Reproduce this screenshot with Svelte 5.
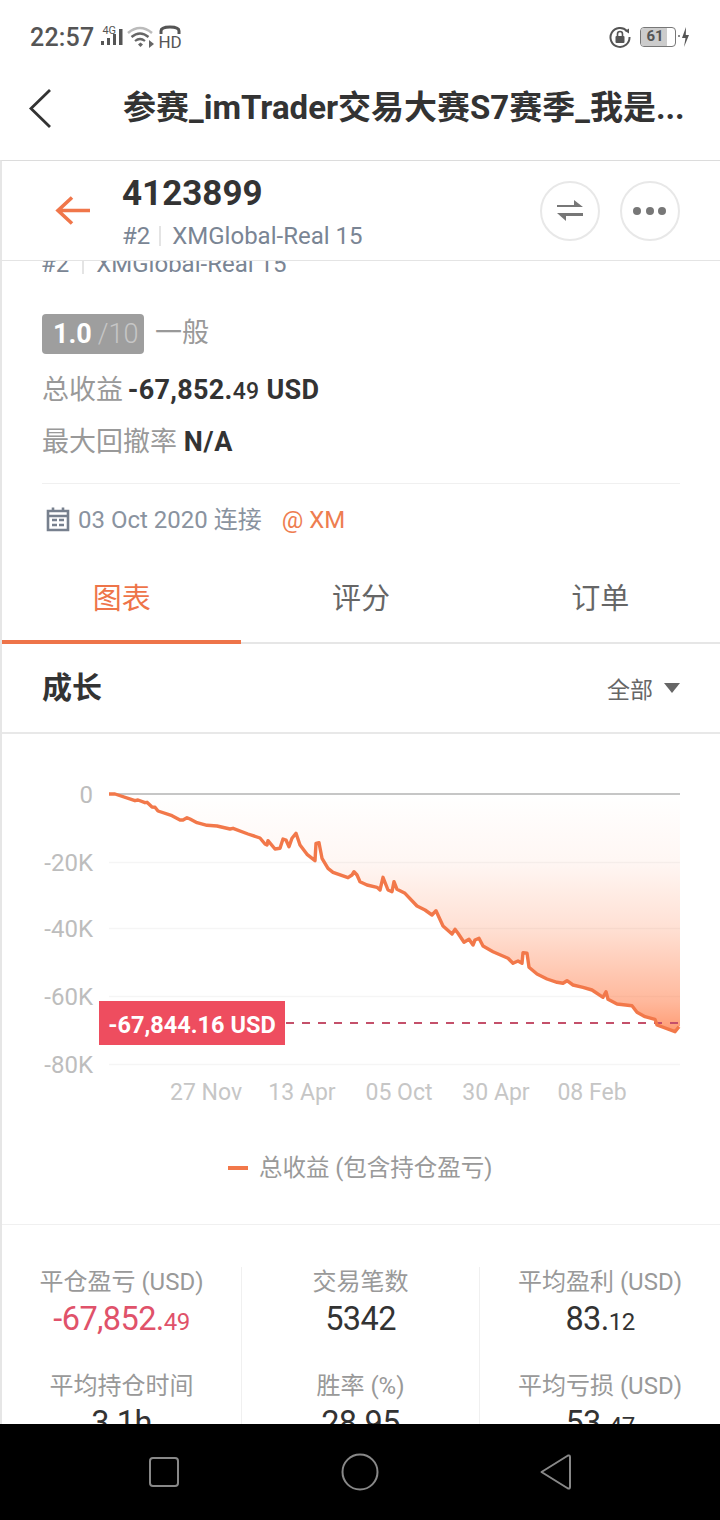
<script>
  // chart series, traced in page-ish pixels (svg origin is the top of the chart block)
  const top = 734;
  const raw = [
    [109,794],[115,794],[135,800.7],[138,800],[145,802.7],[147,802.3],[152,807],[155,807.3],[158,811],[172,815.7],[180,820],[183,820],[187,817.7],[190,819],[197,822.7],[207,825.3],[217,826],[230,829],[233,828.3],[248,834],[260,838],[265,844],[267,845],[268,840.7],[275,849],[280,848.3],[283,839],[286,840],[289,846.7],[292,838.3],[296,833.3],[300,845],[307,854.3],[315,860.7],[316,843.3],[319,842.7],[322,858.3],[328,868.3],[333,872.3],[348,877.7],[352,875],[354,871.7],[357,875],[360,881.7],[367,885],[377,887.3],[380,890],[383,877.3],[388,890],[392,891.7],[394,881.7],[397,889.3],[405,893.3],[417,906],[425,910],[432,915],[436,910.7],[443,926],[452,934],[455,929.3],[458,933.3],[464,942.3],[469,939.3],[473,945],[475,940],[479,938.3],[483,946],[493,951.7],[508,958.3],[513,963.3],[518,961],[522,963.3],[523,952.7],[527,953.3],[529,967.3],[537,974],[547,979],[557,982.3],[563,983.3],[567,980.7],[573,985],[583,987.3],[592,990],[603,997.3],[606,991.7],[608,999.3],[617,1004],[632,1005.7],[637,1012.3],[645,1016.7],[655,1019.3],[657,1025],[675,1031.7],[679,1026.7]
  ];
  const points = raw.map(([x, y]) => [x, +(y - top).toFixed(1)]);
  const linePath = points.map((p, i) => (i ? "L" : "M") + p[0] + " " + p[1]).join(" ");
  const areaPath = linePath + " L680 292 L680 60 L109 60 Z";

  const yTicks = [
    { label: "0", y: 60 },
    { label: "-20K", y: 128.5 },
    { label: "-40K", y: 194.5 },
    { label: "-60K", y: 262.5 },
    { label: "-80K", y: 330.5 }
  ];
  const xTicks = [
    { label: "27 Nov", x: 206 },
    { label: "13 Apr", x: 302 },
    { label: "05 Oct", x: 399 },
    { label: "30 Apr", x: 496 },
    { label: "08 Feb", x: 592 }
  ];
  const stats = [
    { label: "平仓盈亏 (USD)", big: "-67,852.", small: "49", red: true },
    { label: "交易笔数", big: "5342" },
    { label: "平均盈利 (USD)", big: "83.", small: "12" },
    { label: "平均持仓时间", big: "3.1h" },
    { label: "胜率 (%)", big: "28.95" },
    { label: "平均亏损 (USD)", big: "53.", small: "47" }
  ];
</script>

<div class="phone">
  <div class="status">
    <div class="status-left">
      <span class="time">22:57</span>
      <span class="net">4G</span>
      <svg class="signal" width="24" height="20" viewBox="0 0 24 20">
        <rect x="1" y="14" width="3" height="4" fill="#555" />
        <rect x="7" y="11" width="3" height="7" fill="#555" />
        <rect x="13" y="7" width="3" height="11" fill="#555" />
        <rect x="19" y="2" width="3.5" height="16" fill="#555" />
      </svg>
      <svg class="wifi" width="28" height="24" viewBox="0 0 28 24" fill="none">
        <path d="M1 8 Q13 -2 25 8" stroke="#bbb" stroke-width="2.6" />
        <path d="M4.5 12 Q13 5 21.5 12" stroke="#666" stroke-width="2.4" />
        <path d="M8 16 Q13 12 18 16" stroke="#666" stroke-width="2.2" />
        <path d="M11 19.5 L13.5 17.5 L16 19.5 L13.5 22 Z" fill="#666" />
        <path d="M22 15 L27 19 L22 23 Z" fill="#666" />
      </svg>
      <div class="hd">
        <svg width="22" height="10" viewBox="0 0 22 10" fill="none">
          <path d="M2 9 V6 Q2 2 11 2 Q20 2 20 6 V9" stroke="#555" stroke-width="3" />
        </svg>
        <span>HD</span>
      </div>
    </div>
    <div class="status-right">
      <svg width="22" height="22" viewBox="0 0 22 22" fill="none">
        <path d="M18 5 A9.5 9.5 0 1 0 20.5 11" stroke="#555" stroke-width="2" />
        <path d="M16 5 L20 2.5 L20 7.5 Z" fill="#555" />
        <rect x="6.5" y="10" width="9" height="7" rx="1" fill="#555" />
        <path d="M8.5 10 V8 A2.5 2.5 0 0 1 13.5 8 V10" stroke="#555" stroke-width="1.6" />
      </svg>
      <div class="battery"><span class="level">61</span></div>
      <svg class="bolt" width="12" height="22" viewBox="0 0 12 22">
        <circle cx="1" cy="10" r="1" fill="#666" />
        <path d="M8 1 L4 12 H7.5 L6 21 L11 9 H7.8 Z" fill="#555" />
      </svg>
    </div>
  </div>

  <div class="navbar">
    <svg class="chevron" width="28" height="44" viewBox="0 0 28 44" fill="none">
      <path d="M23 3 L4 21.500 L23 40" stroke="#333" stroke-width="2.800" />
    </svg>
    <div class="nav-title">参赛_imTrader交易大赛S7赛季_我是...</div>
  </div>

  <div class="account">
    <svg class="arrow" width="38" height="32" viewBox="0 0 38 32" fill="none">
      <path d="M36 15.500 H5 M18 2.500 L4 15.500 L18 28.500" stroke="#f0764a" stroke-width="3.600" />
    </svg>
    <div class="account-info">
      <div class="account-id">4123899</div>
      <div class="server">#2<i></i>XMGlobal-Real 15</div>
    </div>
    <div class="round-btn">
      <svg width="30" height="26" viewBox="0 0 30 26">
        <path d="M2 9 H28 L19 2 V7 H2 Z" fill="#777" />
        <path d="M28 15 H2 L11 23 V18 H28 Z" fill="#777" />
      </svg>
    </div>
    <div class="round-btn">
      <svg width="36" height="10" viewBox="0 0 36 10">
        <circle cx="5" cy="5" r="4" fill="#777" />
        <circle cx="18" cy="5" r="4" fill="#777" />
        <circle cx="30" cy="5" r="4" fill="#777" />
      </svg>
    </div>
  </div>

  <div class="scroll">
    <div class="peek"><div class="server peek-text">#2<i></i>XMGlobal-Real 15</div></div>

    <div class="summary">
      <div class="rating-row">
        <span class="badge"><b>1.0</b><em>/10</em></span>
        <span class="rating-text">一般</span>
      </div>
      <div class="metric">总收益 <b>-67,852.<small>49</small> USD</b></div>
      <div class="metric second">最大回撤率 <b>N/A</b></div>
      <div class="connect">
        <svg width="26" height="26" viewBox="0 0 26 26" fill="none">
          <path d="M3 5 H23 V24 H3 Z" stroke="#77808e" stroke-width="2.600" />
          <path d="M8 1.500 V6 M18 1.500 V6 M3 10 H23" stroke="#77808e" stroke-width="2.600" />
          <path d="M7 14 H12 M14 14 H19 M7 19 H12 M14 19 H19" stroke="#77808e" stroke-width="2.400" />
        </svg>
        <span class="date">03 Oct 2020 连接</span>
        <span class="broker">@ XM</span>
      </div>
    </div>

    <div class="tabs">
      <div class="tab active">图表</div>
      <div class="tab">评分</div>
      <div class="tab">订单</div>
    </div>

    <div class="section-head">
      <span class="section-title">成长</span>
      <span class="range">全部<i class="caret"></i></span>
    </div>

    <div class="chart">
      <svg width="718" height="490" viewBox="2 0 718 490">
        <defs>
          <linearGradient id="area" gradientUnits="userSpaceOnUse" x1="0" y1="60" x2="0" y2="298">
            <stop offset="0" stop-color="#ff7a45" stop-opacity="0" />
            <stop offset="0.28" stop-color="#ff7a45" stop-opacity="0.06" />
            <stop offset="0.56" stop-color="#ff7a45" stop-opacity="0.23" />
            <stop offset="0.87" stop-color="#ff7a45" stop-opacity="0.53" />
            <stop offset="1" stop-color="#ff7a45" stop-opacity="0.75" />
          </linearGradient>
        </defs>
        {#each yTicks as t, i}
          <line x1="109" x2="680" y1={t.y} y2={t.y} stroke={i ? "#f5f5f5" : "#c6c6c6"} stroke-width={i ? 1.5 : 2} />
          <text class="axis" x="93" y={t.y + 8.500} text-anchor="end">{t.label}</text>
        {/each}
        <path d={areaPath} fill="url(#area)" />
        <line x1="286" x2="680" y1="289" y2="289" stroke="#c4506a" stroke-width="2" stroke-dasharray="8 8" />
        <path d={linePath} fill="none" stroke="#f2784a" stroke-width="3.400" stroke-linejoin="round" />
        <rect x="99" y="267" width="186" height="44" fill="#ee4d5f" />
        <text class="tag" x="192" y="298.500" text-anchor="middle">-67,844.16 USD</text>
        {#each xTicks as t}
          <text class="axis x" x={t.x} y="366" text-anchor="middle">{t.label}</text>
        {/each}
      </svg>
      <div class="legend"><i></i>总收益 (包含持仓盈亏)</div>
    </div>

    <div class="stats">
      {#each stats as s}
        <div class="stat">
          <div class="stat-label">{s.label}</div>
          <div class="stat-value" class:red={s.red}>{s.big}{#if s.small}<small>{s.small}</small>{/if}</div>
        </div>
      {/each}
    </div>
  </div>

  <div class="sysnav">
    <svg width="30" height="32" viewBox="0 0 30 32" fill="none">
      <rect x="1" y="2" width="28" height="28" rx="3" stroke="#888" stroke-width="2" />
    </svg>
    <svg class="home" width="38" height="38" viewBox="0 0 38 38" fill="none">
      <circle cx="19" cy="19" r="17.500" stroke="#888" stroke-width="2" />
    </svg>
    <svg width="34" height="38" viewBox="0 0 34 38" fill="none">
      <path d="M2.500 19 L29 2.500 Q31 2 31 4 V34 Q31 36 29 35.500 Z" stroke="#888" stroke-width="2" stroke-linejoin="round" />
    </svg>
  </div>
</div>

<style>
  :global(body) {
    margin: 0;
    background: #fff;
  }

  .phone {
    width: 720px;
    height: 1520px;
    display: flex;
    flex-direction: column;
    overflow: hidden;
    font-family: Roboto, "Noto Sans CJK SC", sans-serif;
    color: #333;
  }

  .status {
    height: 68px;
    flex: none;
    display: flex;
    justify-content: space-between;
    align-items: center;
    padding: 6px 30px 0;
    box-sizing: border-box;
  }

  .status-left,
  .status-right {
    display: flex;
    align-items: center;
  }

  .time {
    font-size: 25px;
    font-weight: 500;
    color: #555;
    letter-spacing: 0.2px;
  }

  .net {
    font-size: 11px;
    color: #555;
    margin: -14px -13px 0 8px;
    width: 12px;
  }

  .signal {
    margin: 0 0 0 -1px;
  }

  .wifi {
    margin-left: 3px;
  }

  .hd {
    display: flex;
    flex-direction: column;
    align-items: center;
    margin-left: 3px;
    font-size: 17px;
    line-height: 14px;
    color: #555;
  }

  .status-right svg:first-child {
    margin-right: 9px;
  }

  .battery {
    width: 36px;
    height: 20px;
    box-sizing: border-box;
    border: 1.5px solid #777;
    border-radius: 4px;
    overflow: hidden;
  }

  .level {
    display: block;
    width: 24px;
    height: 100%;
    background: #ccc;
    text-align: center;
    font-size: 15px;
    line-height: 17px;
    font-weight: 700;
    color: #555;
    padding-left: 2px;
  }

  .bolt {
    margin: 0 0 0 2px;
  }

  .navbar {
    height: 92px;
    flex: none;
    display: flex;
    align-items: center;
    padding: 0 0 14px 27px;
    box-sizing: border-box;
  }

  .chevron {
    margin-top: 3px;
    margin-right: 69px;
  }

  .nav-title {
    font-size: 33px;
    font-weight: 700;
    white-space: nowrap;
    color: #333;
    margin-left: -1px;
    margin-top: -4px;
  }

  .account {
    height: 101px;
    flex: none;
    box-sizing: border-box;
    border-top: 1.5px solid #dcdcdc;
    border-bottom: 1.5px solid #e4e4e4;
    border-left: 2px solid #e6e6e6;
    display: flex;
    align-items: center;
    padding: 0 40px 0 52px;
    gap: 20px;
  }

  .arrow {
    margin-right: 10px;
    margin-top: 1px;
  }

  .account-info {
    flex: 1;
  }

  .account-id {
    font-size: 35px;
    font-weight: 700;
    line-height: 40px;
    margin-top: 3px;
  }

  .server {
    font-size: 24px;
    line-height: 30px;
    color: #7a8594;
    margin-top: 7px;
    display: flex;
    align-items: center;
  }

  .server i {
    width: 2px;
    height: 20px;
    background: #e4e4e4;
    margin: 0 11px 0 9px;
  }

  .round-btn {
    width: 60px;
    height: 60px;
    box-sizing: border-box;
    border: 2px solid #e8e8e8;
    border-radius: 50%;
    display: flex;
    align-items: center;
    justify-content: center;
  }

  .scroll {
    flex: 1;
    min-height: 0;
    overflow: hidden;
    border-left: 2px solid #e6e6e6;
  }

  .peek {
    height: 15px;
    overflow: hidden;
    padding-left: 39px;
  }

  .peek-text {
    margin-top: -12px;
  }

  .peek-text i {
    margin: 0 12px 0 13px;
  }

  .summary {
    padding: 39px 40px 0;
  }

  .rating-row {
    display: flex;
    align-items: center;
    gap: 11px;
  }

  .badge {
    width: 102px;
    height: 40px;
    margin-top: -1px;
    box-sizing: border-box;
    padding-left: 11px;
    background: #9e9e9e;
    border-radius: 4px;
    display: flex;
    align-items: center;
    font-size: 27px;
    color: #fff;
  }

  .badge b {
    font-weight: 700;
  }

  .badge em {
    font-style: normal;
    font-weight: 300;
    color: #c6c6c6;
    margin-left: 6px;
  }

  .rating-text {
    font-size: 27px;
    line-height: 34px;
    color: #999;
    margin-top: -3px;
  }

  .metric {
    font-size: 27px;
    line-height: 36px;
    color: #999;
    margin-top: 18px;
  }

  .metric.second {
    margin-top: 14px;
  }

  .metric b {
    font-size: 27px;
    color: #333;
    font-weight: 700;
    letter-spacing: 0.3px;
    margin-left: -2px;
  }

  .metric.second b {
    letter-spacing: 0.8px;
    margin-left: 0;
  }

  .metric small {
    font-size: 23px;
    font-weight: 500;
  }

  .connect {
    margin-top: 23px;
    border-top: 1.5px solid #f0f0f0;
    padding-top: 22px;
    height: 54px;
    display: flex;
    align-items: flex-start;
    font-size: 24px;
    line-height: 28px;
    color: #8a939f;
  }

  .connect svg {
    margin: 0 7px 0 3px;
  }

  .broker {
    margin-left: 20px;
    color: #ee7d50;
  }

  .tabs {
    display: flex;
    height: 84px;
    box-sizing: border-box;
    border-bottom: 2px solid #e6e6e6;
  }

  .tab {
    width: 240px;
    text-align: center;
    font-size: 29px;
    line-height: 78px;
    color: #666;
    box-sizing: border-box;
  }

  .tab.active {
    color: #ee7449;
    border-bottom: 4px solid #ee7449;
    height: 84px;
  }

  .section-head {
    height: 90px;
    box-sizing: border-box;
    border-bottom: 2px solid #e8e8e8;
    display: flex;
    justify-content: space-between;
    align-items: center;
    padding: 0 40px;
  }

  .section-title {
    font-size: 30px;
    font-weight: 700;
    margin-top: -6px;
  }

  .range {
    display: flex;
    align-items: center;
    font-size: 23px;
    color: #666;
  }

  .caret {
    width: 0;
    height: 0;
    border-left: 8px solid transparent;
    border-right: 8px solid transparent;
    border-top: 10px solid #666;
    margin-left: 11px;
  }

  .chart {
    height: 491px;
    position: relative;
    box-sizing: border-box;
    border-bottom: 1.5px solid #f0f0f0;
  }

  .chart svg {
    display: block;
    position: absolute;
    inset: 0;
  }

  .axis {
    font-size: 24px;
    fill: #bdbdbd;
  }

  .axis.x {
    fill: #c6c6c6;
    font-size: 23px;
  }

  .tag {
    font-size: 23.5px;
    font-weight: 700;
    fill: #fff;
  }

  .legend {
    position: absolute;
    left: 226px;
    top: 419px;
    font-size: 23.5px;
    line-height: 30px;
    color: #999;
    display: flex;
    align-items: center;
    gap: 11px;
  }

  .legend i {
    width: 20px;
    height: 4px;
    background: #f2784a;
  }

  .stats {
    display: grid;
    grid-template-columns: 239px 238px 1fr;
    padding-top: 42px;
    row-gap: 24px;
  }

  .stat {
    text-align: center;
    height: 80px;
    border-left: 1.5px solid #f0f0f0;
    position: relative;
  }

  .stat:nth-child(3n + 1) {
    border-left: none;
  }

  .stat:nth-child(-n + 3)::after {
    content: "";
    position: absolute;
    left: -1.5px;
    top: 80px;
    height: 24px;
    border-left: 1.5px solid #f0f0f0;
  }

  .stat:nth-child(3n + 1)::after {
    display: none;
  }

  .stat-label {
    font-size: 24px;
    line-height: 30px;
    color: #999;
  }

  .stat-value {
    font-size: 32.5px;
    line-height: 44px;
    color: #333;
    letter-spacing: -0.6px;
  }

  .stat-value small {
    font-size: 24px;
  }

  .stat-value.red {
    color: #e0526a;
  }

  .sysnav {
    height: 96px;
    flex: none;
    background: #000;
    display: flex;
    align-items: center;
    justify-content: space-between;
    padding: 0 147px 0 149px;
    box-sizing: border-box;
  }

  .home {
    margin-left: 2px;
  }
</style>
